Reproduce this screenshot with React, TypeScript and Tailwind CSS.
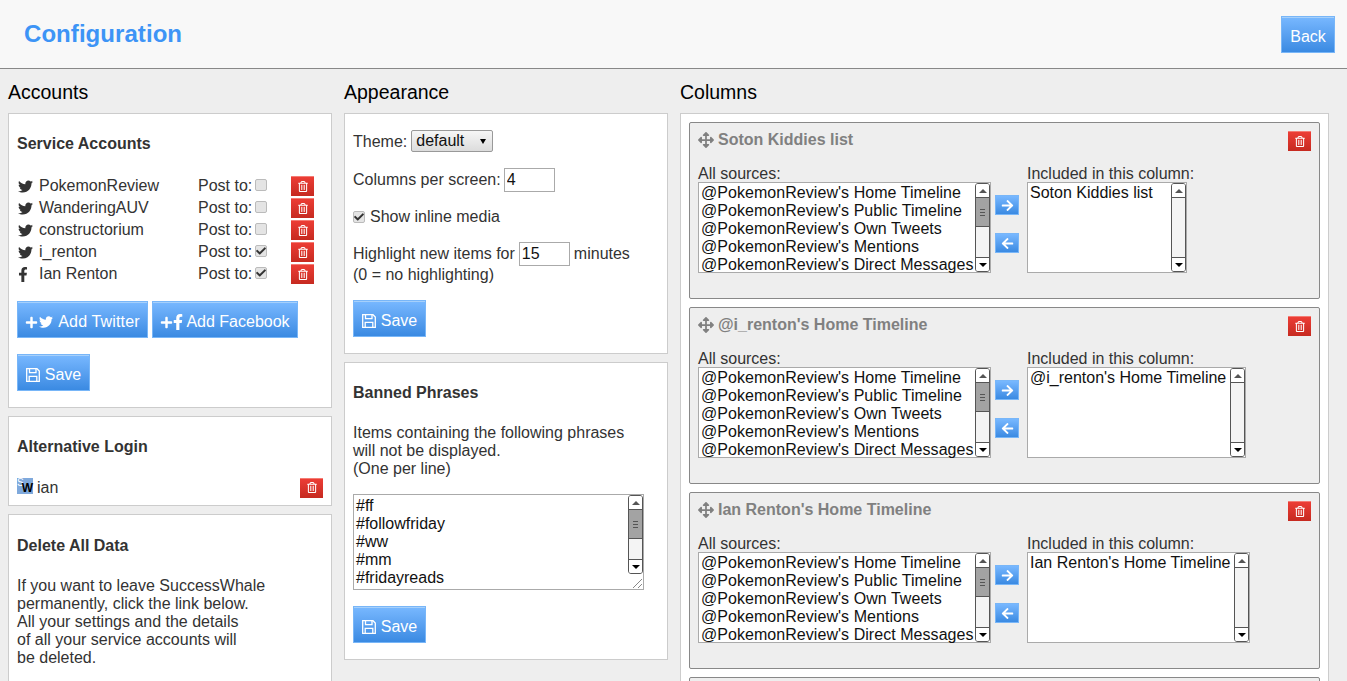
import {
  FaArrowLeft,
  FaArrowRight,
  FaArrowsAlt,
  FaCheck,
  FaFacebookF,
  FaPlus,
  FaRegTrashAlt,
  FaTwitter,
} from "react-icons/fa";
import type { ReactNode } from "react";

const accounts = [
  { name: "PokemonReview", service: "twitter", post: false },
  { name: "WanderingAUV", service: "twitter", post: false },
  { name: "constructorium", service: "twitter", post: false },
  { name: "i_renton", service: "twitter", post: true },
  { name: "Ian Renton", service: "facebook", post: true },
];

const sources = [
  "@PokemonReview's Home Timeline",
  "@PokemonReview's Public Timeline",
  "@PokemonReview's Own Tweets",
  "@PokemonReview's Mentions",
  "@PokemonReview's Direct Messages",
];

const columns = [
  { title: "Soton Kiddies list", width: "w-[160px]" },
  { title: "@i_renton's Home Timeline", width: "w-[219px]" },
  { title: "Ian Renton's Home Timeline", width: "w-[223px]" },
];

function BlueButton({ children, className }: { children: ReactNode; className: string }) {
  return (
    <button className={`flex h-[37px] items-center justify-center border border-[#78b6f8] bg-gradient-to-b from-[#78b8ff] to-[#3a8ae2] pt-[5px] text-white shadow-[inset_0_1px_0_#a6d0fb] ${className}`}>
      {children}
    </button>
  );
}

function SaveIcon() {
  return (
    <svg viewBox="0 0 14 14" className="h-[14px] w-[14px]" fill="none" stroke="currentColor" strokeWidth="1.3">
      <path d="M.7.7H11L13.3 3V13.3H.7Z" />
      <path d="M3.5.7V4.7H10V.7" />
      <path d="M3.2 13.3V8.3H10.8V13.3" />
    </svg>
  );
}

function SaveButton() {
  return (
    <BlueButton className="w-[73px] gap-[5px]">
      <SaveIcon />
      Save
    </BlueButton>
  );
}

function DeleteButton() {
  return (
    <button className="flex h-[20px] w-[23px] items-center justify-center bg-gradient-to-b from-[#ee3e36] to-[#c62a20] text-white shadow-[inset_0_1px_0_#f47c74]">
      <FaRegTrashAlt className="h-[11px] w-[10px]" />
    </button>
  );
}

function Check({ on }: { on: boolean }) {
  return (
    <span className="flex h-[12px] w-[12px] items-center justify-center rounded-[2px] border border-[#bbb] bg-[#e4e4e4] text-[#333]">
      {on && <FaCheck className="h-[10px] w-[10px]" />}
    </span>
  );
}

function ScrollBar({ thumb, height }: { thumb: boolean; height: number }) {
  return (
    <div className="flex w-[15px] shrink-0 flex-col overflow-hidden rounded-[3px] border border-[#555] bg-[#f4f4f4]" style={{ height }}>
      <div className="flex h-[14px] shrink-0 items-center justify-center border-b border-[#555] bg-white">
        <span className="h-0 w-0 border-x-[4px] border-b-[4px] border-x-transparent border-b-[#555]" />
      </div>
      {thumb && (
        <div className="flex h-[29px] shrink-0 flex-col items-center justify-center gap-[2px] border-b border-[#555] bg-[#a3a3a3]">
          <span className="h-px w-[5px] bg-[#555]" />
          <span className="h-px w-[5px] bg-[#555]" />
          <span className="h-px w-[5px] bg-[#555]" />
        </div>
      )}
      <div className="flex-1" />
      <div className="flex h-[14px] shrink-0 items-center justify-center border-t border-[#555] bg-white">
        <span className="h-0 w-0 border-x-[4px] border-t-[4px] border-x-transparent border-t-black" />
      </div>
    </div>
  );
}

function ListBox({ items, thumb, width }: { items: string[]; thumb: boolean; width: string }) {
  return (
    <div className={`flex h-[91px] justify-between border border-[#aaa] bg-white text-[#111] ${width}`}>
      <div className="whitespace-nowrap pl-[2px] pt-px leading-[18px]">
        {items.map((item) => (
          <div key={item} className="h-[18px]">{item}</div>
        ))}
      </div>
      <ScrollBar thumb={thumb} height={89} />
    </div>
  );
}

function ColumnPanel({ title, width }: { title: string; width: string }) {
  return (
    <div className="h-[177px] shrink-0 rounded-[2px] border border-[#888] bg-[#eee] px-[8px] pt-[7px]">
      <div className="flex h-[20px] items-center justify-between">
        <div className="flex items-center gap-[4px] font-bold text-[#808080]">
          <FaArrowsAlt className="h-[16px] w-[16px]" />
          {title}
        </div>
        <div className="mt-[2px]">
          <DeleteButton />
        </div>
      </div>
      <div className="mt-[14px] flex">
        <div>
          <div className="h-[18px] leading-[20px]">All sources:</div>
          <ListBox items={sources} thumb width="w-[293px] tracking-[0.05px]" />
        </div>
        <div className="ml-[4px] mt-[31px] flex flex-col gap-[18px]">
          <button className="flex h-[20px] w-[24px] items-center justify-center border border-[#78b6f8] bg-gradient-to-b from-[#78b8ff] to-[#3a8ae2] text-white">
            <FaArrowRight className="h-[13px] w-[13px]" />
          </button>
          <button className="flex h-[20px] w-[24px] items-center justify-center border border-[#78b6f8] bg-gradient-to-b from-[#78b8ff] to-[#3a8ae2] text-white">
            <FaArrowLeft className="h-[13px] w-[13px]" />
          </button>
        </div>
        <div className="ml-[8px]">
          <div className="h-[18px] leading-[20px]">Included in this column:</div>
          <ListBox items={[title]} thumb={false} width={width} />
        </div>
      </div>
    </div>
  );
}

function Heading({ children }: { children: ReactNode }) {
  return <h2 className="h-[44px] pt-[12px] text-[19.5px] leading-[22px] text-black">{children}</h2>;
}

function Card({ children, className }: { children: ReactNode; className: string }) {
  return <section className={`shrink-0 border border-[#ccc] bg-white px-[8px] ${className}`}>{children}</section>;
}

export default function App() {
  return (
    <div className="flex h-[681px] flex-col overflow-hidden bg-[#eee] font-['Liberation_Sans',sans-serif] text-[16px] text-[#333]">
      <header className="flex h-[69px] shrink-0 items-start justify-between border-b border-[#888] bg-[#f8f8f8] pl-[24px] pr-[12px]">
        <h1 className="mt-[20px] text-[24px] font-bold leading-[28px] tracking-[0.06px] text-[#3d94f6]">Configuration</h1>
        <BlueButton className="mt-[16px] w-[54px]">Back</BlueButton>
      </header>

      <main className="flex min-h-0 flex-1 pl-[8px]">
        <div className="w-[324px] shrink-0">
          <Heading>Accounts</Heading>
          <div className="flex flex-col gap-[8px]">
            <Card className="h-[295px]">
              <h3 className="pt-[20px] font-bold leading-[20px]">Service Accounts</h3>
              <div className="mt-[21px]">
                {accounts.map((account) => (
                  <div key={account.name} className="flex h-[22px] items-center">
                    <span className="flex w-[22px] shrink-0 pl-px">
                      {account.service === "twitter" ? (
                        <FaTwitter className="h-[15px] w-[15px]" />
                      ) : (
                        <FaFacebookF className="h-[15px] w-[10px]" />
                      )}
                    </span>
                    <span className="w-[159px] shrink-0">{account.name}</span>
                    <span className="w-[57px] shrink-0">Post to:</span>
                    <span className="mb-[3px] w-[36px] shrink-0">
                      <Check on={account.post} />
                    </span>
                    <DeleteButton />
                  </div>
                ))}
              </div>
              <div className="mt-[16px] flex gap-[4px]">
                <BlueButton className="w-[131px] tracking-[0.15px]">
                  <FaPlus className="h-[13px] w-[13px]" />
                  <FaTwitter className="ml-px mr-[5px] h-[14px] w-[14px]" />
                  Add Twitter
                </BlueButton>
                <BlueButton className="w-[146px]">
                  <FaPlus className="h-[13px] w-[13px]" />
                  <FaFacebookF className="mr-[3px] h-[16px] w-[10px]" />
                  Add Facebook
                </BlueButton>
              </div>
              <div className="mt-[16px]">
                <SaveButton />
              </div>
            </Card>

            <Card className="h-[90px]">
              <h3 className="pt-[20px] font-bold leading-[20px]">Alternative Login</h3>
              <div className="mt-[18px] flex items-center justify-between">
                <div className="flex items-center gap-[4px]">
                  <span className="relative mb-[3px] h-[16px] w-[16px] bg-[#7fa9dc]">
                    <span className="absolute left-0 top-0 text-[10px] leading-[10px] text-white">S</span>
                    <span className="absolute bottom-0 right-0 text-[12px] leading-[12px] font-bold text-black">W</span>
                  </span>
                  <span className="pt-px">ian</span>
                </div>
                <DeleteButton />
              </div>
            </Card>

            <Card className="h-[200px]">
              <h3 className="pt-[21px] font-bold leading-[20px]">Delete All Data</h3>
              <p className="mt-[21px] leading-[18px]">
                If you want to leave SuccessWhale
                <br />
                permanently, click the link below.
                <br />
                All your settings and the details
                <br />
                of all your service accounts will
                <br />
                be deleted.
              </p>
            </Card>
          </div>
        </div>

        <div className="ml-[12px] w-[324px] shrink-0">
          <Heading>Appearance</Heading>
          <div className="flex flex-col gap-[8px]">
            <Card className="h-[241px]">
              <div className="mt-[16px] flex h-[22px] items-center gap-[4px]">
                <span className="pt-[2px]">Theme:</span>
                <div className="relative h-[22px] w-[82px] rounded-[2px] border border-[#999] bg-gradient-to-b from-[#f6f6f6] to-[#dcdcdc] pl-[4px] leading-[20px] text-[#111]">
                  default
                  <span className="absolute right-[6px] top-[8px] h-0 w-0 border-x-[3px] border-t-[5px] border-x-transparent border-t-black" />
                </div>
              </div>
              <div className="mt-[16px] flex h-[24px] items-center gap-[3px]">
                Columns per screen:
                <input readOnly value="4" className="h-[24px] w-[51px] border border-[#aaa] bg-white pl-[2px] text-[#111]" />
              </div>
              <div className="mt-[13px] flex h-[24px] items-center gap-[5px]">
                <Check on />
                Show inline media
              </div>
              <div className="mt-[13px] flex h-[24px] items-center gap-[4px]">
                Highlight new items for
                <input readOnly value="15" className="h-[24px] w-[51px] border border-[#aaa] bg-white pl-[2px] text-[#111]" />
                minutes
              </div>
              <p className="mt-[-1px] leading-[20px]">(0 = no highlighting)</p>
              <div className="mt-[15px]">
                <SaveButton />
              </div>
            </Card>

            <Card className="h-[298px]">
              <h3 className="pt-[20px] font-bold leading-[20px]">Banned Phrases</h3>
              <p className="mt-[21px] leading-[18px]">
                Items containing the following phrases
                <br />
                will not be displayed.
                <br />
                (One per line)
              </p>
              <div className="mt-[16px] flex h-[96px] w-[291px] justify-between border border-[#aaa] bg-white text-[#111]">
                <div className="pl-[2px] pt-[2px] leading-[18px]">
                  <div>#ff</div>
                  <div>#followfriday</div>
                  <div>#ww</div>
                  <div>#mm</div>
                  <div>#fridayreads</div>
                </div>
                <div className="flex flex-col">
                  <ScrollBar thumb height={79} />
                  <svg viewBox="0 0 15 15" className="h-[15px] w-[15px] text-[#888]">
                    <path d="M5 14 14 5M10 14 14 10" stroke="currentColor" fill="none" />
                  </svg>
                </div>
              </div>
              <div className="mt-[16px]">
                <SaveButton />
              </div>
            </Card>
          </div>
        </div>

        <div className="ml-[12px] w-[649px] shrink-0">
          <Heading>Columns</Heading>
          <section className="flex h-[600px] flex-col gap-[8px] border border-[#ccc] bg-white px-[8px] pt-[8px]">
            {columns.map((column) => (
              <ColumnPanel key={column.title} title={column.title} width={column.width} />
            ))}
            <div className="h-[177px] shrink-0 rounded-[2px] border border-[#888] bg-[#eee]" />
          </section>
        </div>
      </main>
    </div>
  );
}
